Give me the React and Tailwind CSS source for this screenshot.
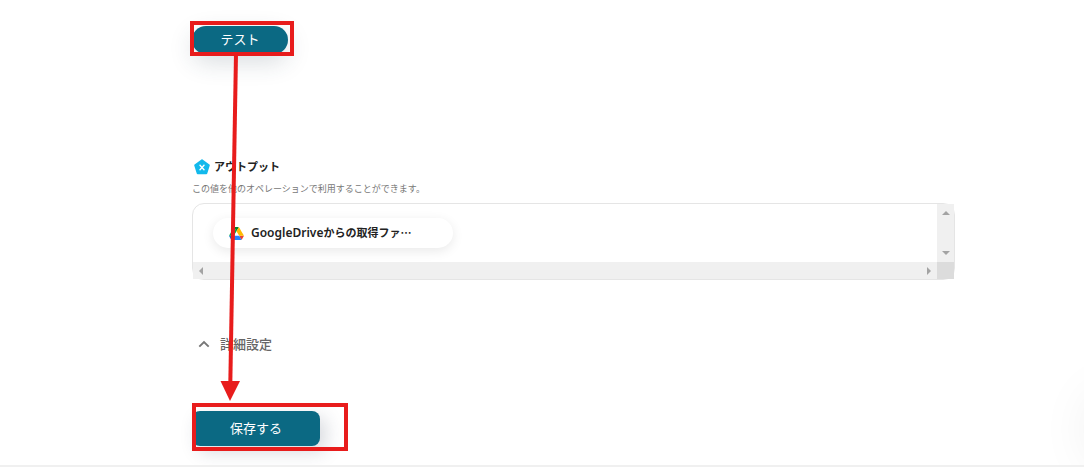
function OutputIcon() {
  return (
    <svg className="size-4 shrink-0" viewBox="0 0 16 16" aria-hidden="true">
      <path
        d="M8 1.2 14.8 6.2 12.3 14.3H3.7L1.2 6.2Z"
        fill="#12b9ec"
        stroke="#12b9ec"
        strokeWidth="2"
        strokeLinejoin="round"
      />
      <path d="M6 6.2 10 10.8M10 6.2 6 10.8" stroke="#fff" strokeWidth="1.3" fill="none" />
      <path d="M5 6.2H7M9 6.2h2M5 10.8H7M9 10.8H11" stroke="#fff" strokeWidth="0.7" fill="none" />
    </svg>
  );
}

function DriveIcon() {
  return (
    <svg className="h-[13px] w-[15px] shrink-0" viewBox="0 0 87.3 78" aria-hidden="true">
      <path d="m6.6 66.85 3.85 6.65c.8 1.4 1.95 2.5 3.3 3.3l13.75-23.8h-27.5c0 1.55.4 3.1 1.2 4.5z" fill="#0066da" />
      <path d="m43.65 25-13.75-23.8c-1.35.8-2.5 1.9-3.3 3.3l-25.4 44a9.06 9.06 0 0 0 -1.2 4.5h27.5z" fill="#00ac47" />
      <path d="m73.55 76.8c1.35-.8 2.5-1.9 3.3-3.3l1.6-2.75 7.65-13.25c.8-1.4 1.2-2.95 1.2-4.5h-27.5l5.85 11.5z" fill="#ea4335" />
      <path d="m43.65 25 13.75-23.8c-1.35-.8-2.9-1.2-4.5-1.2h-18.5c-1.6 0-3.15.45-4.5 1.2z" fill="#00832d" />
      <path d="m59.8 53h-32.3l-13.75 23.8c1.35.8 2.9 1.2 4.5 1.2h50.8c1.6 0 3.15-.45 4.5-1.2z" fill="#2684fc" />
      <path d="m73.4 26.5-12.7-22c-.8-1.4-1.95-2.5-3.3-3.3l-13.75 23.8 16.15 28h27.45c0-1.55-.4-3.1-1.2-4.5z" fill="#ffba00" />
    </svg>
  );
}

function Triangle({ points, className }) {
  return (
    <svg className={className} viewBox="0 0 8 8" aria-hidden="true">
      <polygon points={points} fill="#a3a3a3" />
    </svg>
  );
}

function FlowArrow() {
  return (
    <svg
      className="pointer-events-none absolute top-[54px] left-[216px] h-[348px] w-[28px]"
      viewBox="0 0 28 348"
      aria-hidden="true"
    >
      <path d="M20 0 14.3 330" stroke="#e81c1c" strokeWidth="4" />
      <polygon points="4.5,327 24,327 14,347" fill="#e81c1c" />
    </svg>
  );
}

export default function App() {
  return (
    <div className="relative overflow-hidden border-b-2 border-[#f0f0f0] bg-white font-['Noto_Sans','Noto_Sans_CJK_JP',sans-serif] text-[#222]">
      <main className="flex flex-col items-start pt-[26px] pr-[129px] pb-[19px] pl-48">
        <div className="relative">
          <button
            type="button"
            className="flex h-7 w-24 items-center justify-center rounded-full bg-[#0b6983] text-[13px] text-white shadow-[0_8px_24px_rgba(40,60,75,0.18)]"
          >
            テスト
          </button>
          <span className="pointer-events-none absolute -top-[5px] -left-[2px] h-[35px] w-[104px] border-4 border-[#e81c1c]" />
        </div>

        <section className="mt-[103px] w-full">
          <div className="flex h-5 items-center gap-1 pl-[2px]">
            <OutputIcon />
            <h2 className="text-[11px] font-bold">アウトプット</h2>
          </div>
          <p className="mt-1 h-4 text-[9px] leading-4 text-[#777]">
            この値を他のオペレーションで利用することができます。
          </p>

          <div className="mt-[6px] grid h-[77px] grid-cols-[1fr_17px] grid-rows-[1fr_17px] rounded-xl border border-[#e5e5e5]">
            <div className="pt-[14px] pl-5">
              <div className="flex h-[30px] w-60 items-center gap-[7px] rounded-full bg-white pl-4 shadow-[0_3px_12px_rgba(0,0,0,0.09)]">
                <DriveIcon />
                <span className="text-[11px] leading-4 font-semibold">
                  <span className="text-xs">GoogleDrive</span>からの取得ファ⋯
                </span>
              </div>
            </div>
            <div className="flex flex-col items-center justify-between bg-[#f0f0f0] py-[5px]">
              <Triangle className="size-2" points="0,6 4,2 8,6" />
              <Triangle className="size-2" points="0,2 4,6 8,2" />
            </div>
            <div className="flex items-center justify-between bg-[#f0f0f0] px-1">
              <Triangle className="size-2" points="6,0 2,4 6,8" />
              <Triangle className="size-2" points="2,0 6,4 2,8" />
            </div>
            <div className="bg-[#dcdcdc]" />
          </div>
        </section>

        <button
          type="button"
          className="mt-[55px] flex h-5 items-center gap-[10px] pl-[6px] text-[13px] font-medium text-[#666]"
        >
          <svg className="h-3 w-3" viewBox="0 0 12 12" fill="none" aria-hidden="true">
            <path d="M1.3 7.7 6 3l4.7 4.7" stroke="#777" strokeWidth="1.9" />
          </svg>
          詳細設定
        </button>

        <div className="relative mt-14">
          <button
            type="button"
            className="flex h-[35px] w-32 items-center justify-center rounded-lg bg-[#0b6983] text-[13px] text-white shadow-[6px_6px_18px_rgba(40,50,80,0.18)]"
          >
            保存する
          </button>
          <span className="pointer-events-none absolute -top-2 left-0 h-12 w-[156px] border-4 border-[#e81c1c]" />
        </div>
      </main>

      <FlowArrow />
      <div className="pointer-events-none absolute -right-[72px] bottom-1 size-16 rounded-full shadow-[0_0_56px_rgba(0,0,0,0.1)]" />
    </div>
  );
}
